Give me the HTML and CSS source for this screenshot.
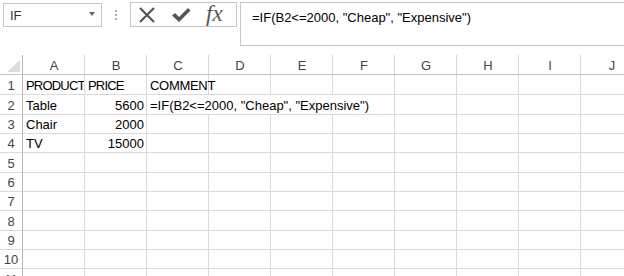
FILE: index.html
```html
<!DOCTYPE html>
<html lang="en">
<head>
  <meta charset="UTF-8">
  <title>IF formula</title>
  <link rel="stylesheet" href="styles.css">
</head>
<body>
  <div class="toolbar">
    <div class="name-box">
      <span>IF</span>
      <span class="caret"></span>
    </div>
    <div class="grip"><i></i><i></i><i></i></div>
    <div class="fx-buttons">
      <svg class="icon" width="18" height="18" viewBox="0 0 18 18"><path d="M2 2 L16 16 M16 2 L2 16" stroke="#555" stroke-width="2.2" fill="none"/></svg>
      <svg class="icon" width="20" height="18" viewBox="0 0 20 18"><path d="M1 9.5 L4 7 L8 11 L17 2 L19.5 4.5 L8 16 Z" fill="#555"/></svg>
      <span class="fx">fx</span>
    </div>
    <div class="formula-bar">=IF(B2&lt;=2000, "Cheap", "Expensive")</div>
  </div>

  <div class="sheet">
    <div class="row r20 head">
      <div class="corner"><span class="tri"></span></div>
      <div>A</div><div>B</div><div>C</div><div>D</div><div>E</div>
      <div>F</div><div>G</div><div>H</div><div>I</div><div>J</div>
    </div>
    <div class="row r20">
      <div class="num">1</div>
      <div class="caps">PRODUCT</div><div class="caps">PRICE</div><div class="caps wide">COMMENT</div><div></div><div></div>
      <div></div><div></div><div></div><div></div><div></div>
    </div>
    <div class="row r20">
      <div class="num">2</div>
      <div>Table</div><div class="n">5600</div>
      <div class="span4">=IF(B2&lt;=2000, "Cheap", "Expensive")</div>
      <div></div><div></div><div></div><div></div>
    </div>
    <div class="row r19">
      <div class="num">3</div>
      <div>Chair</div><div class="n">2000</div><div></div><div></div><div></div>
      <div></div><div></div><div></div><div></div><div></div>
    </div>
    <div class="row r19">
      <div class="num">4</div>
      <div>TV</div><div class="n">15000</div><div></div><div></div><div></div>
      <div></div><div></div><div></div><div></div><div></div>
    </div>
    <div class="row r20">
      <div class="num">5</div>
      <div></div><div></div><div></div><div></div><div></div>
      <div></div><div></div><div></div><div></div><div></div>
    </div>
    <div class="row r19">
      <div class="num">6</div>
      <div></div><div></div><div></div><div></div><div></div>
      <div></div><div></div><div></div><div></div><div></div>
    </div>
    <div class="row r19">
      <div class="num">7</div>
      <div></div><div></div><div></div><div></div><div></div>
      <div></div><div></div><div></div><div></div><div></div>
    </div>
    <div class="row r20">
      <div class="num">8</div>
      <div></div><div></div><div></div><div></div><div></div>
      <div></div><div></div><div></div><div></div><div></div>
    </div>
    <div class="row r19">
      <div class="num">9</div>
      <div></div><div></div><div></div><div></div><div></div>
      <div></div><div></div><div></div><div></div><div></div>
    </div>
    <div class="row r19">
      <div class="num">10</div>
      <div></div><div></div><div></div><div></div><div></div>
      <div></div><div></div><div></div><div></div><div></div>
    </div>
    <div class="row r20">
      <div class="num">11</div>
      <div></div><div></div><div></div><div></div><div></div>
      <div></div><div></div><div></div><div></div><div></div>
    </div>
  </div>
</body>
</html>
```

FILE: styles.css
```css
* { box-sizing: border-box; }
html, body { margin: 0; padding: 0; }

body {
  background: #fff;
  font-family: 'Liberation Sans', Arial, sans-serif;
  font-size: 13px;
  color: #000;
  width: 624px;
  height: 276px;
  overflow: hidden;
}

/* Formula toolbar */
.toolbar {
  display: flex;
  align-items: flex-start;
  height: 55px;
  padding: 2px 0 0 3px;
}

.name-box {
  margin-top: 1px;
  width: 99px;
  height: 24px;
  border: 1px solid #c6c6c6;
  display: flex;
  align-items: center;
  justify-content: space-between;
  padding: 0 6px 0 6px;
  color: #333;
}

.caret {
  width: 0; height: 0;
  border-left: 3.5px solid transparent;
  border-right: 3.5px solid transparent;
  border-top: 4px solid #666;
  margin-top: -2px;
}

.grip {
  margin: 8px 0 0 13px;
  display: flex;
  flex-direction: column;
  gap: 2px;
}
.grip i {
  display: block;
  width: 2px; height: 2px;
  background: #aaa;
}

.fx-buttons {
  margin-left: 13px;
  width: 107px;
  height: 25px;
  border: 1px solid #c6c6c6;
  display: flex;
  align-items: center;
  gap: 15px;
  padding-left: 7px;
}

.fx {
  font-family: 'Liberation Serif', 'Times New Roman', serif;
  font-style: italic;
  font-size: 23px;
  color: #555;
  line-height: 1;
  margin-top: -3px;
}

.formula-bar {
  margin-left: 3px;
  flex: 1;
  height: 44px;
  border: 1px solid #c6c6c6;
  border-right: none;
  padding: 7px 0 0 11px;
  white-space: nowrap;
}

/* Grid */
.row {
  display: grid;
  grid-template-columns: 23px repeat(10, 62px);
}
.r20 { height: 20px; }
.r19 { height: 19px; }

.row > div {
  border-right: 1px solid #dadada;
  border-bottom: 1px solid #dadada;
  display: flex;
  align-items: flex-end;
  line-height: 15px;
  padding: 0 2px 1px 3px;
  white-space: nowrap;
  overflow: hidden;
}

.row > .num {
  justify-content: center;
  padding: 0 0 1px 0;
  color: #444;
  border-right-color: #b8b8b8;
}

.head > div {
  justify-content: center;
  color: #444;
  border-bottom-color: #c4c4c4;
  border-right-color: #d6d6d6;
}
.head > .corner {
  border-right-color: #b8b8b8;
  position: relative;
}
.tri {
  position: absolute;
  right: 2px;
  bottom: 2px;
  width: 0; height: 0;
  border-left: 13px solid transparent;
  border-bottom: 12px solid #dcdcdc;
}

.row > .caps { letter-spacing: -0.8px; padding-right: 0; }
.row > .wide { letter-spacing: -0.3px; overflow: visible; }
.row > .n { justify-content: flex-end; }
.row > .span4 { grid-column: span 4; overflow: visible; }
```
